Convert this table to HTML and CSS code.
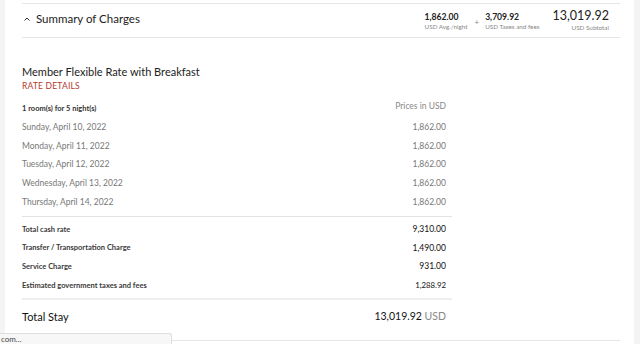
FILE: index.html
```html
<!DOCTYPE html>
<html lang="en">
<head>
  <meta charset="UTF-8">
  <meta name="viewport" content="width=device-width, initial-scale=1.0">
  <title>Summary of Charges</title>
  <link rel="stylesheet" href="styles.css">
</head>
<body>
  <div class="page">
    <div class="gutter"></div>
    <div class="main">
      <div class="summary">
        <div class="summary-title">
          <svg class="chevron" width="6" height="4" viewBox="0 0 6 4"><path d="M0.5 3.5 L3 1 L5.5 3.5" fill="none" stroke="#333" stroke-width="1"/></svg>
          <span>Summary of Charges</span>
        </div>
        <div class="summary-figures">
          <div class="figure">
            <div class="figure-value">1,862.00</div>
            <div class="figure-label">USD Avg./night</div>
          </div>
          <div class="plus">+</div>
          <div class="figure">
            <div class="figure-value">3,709.92</div>
            <div class="figure-label">USD Taxes and fees</div>
          </div>
          <div class="figure figure-total">
            <div class="figure-value">13,019.92</div>
            <div class="figure-label">USD Subtotal</div>
          </div>
        </div>
      </div>

      <div class="rate">
        <h2 class="rate-name">Member Flexible Rate with Breakfast</h2>
        <div class="rate-link">RATE DETAILS</div>

        <div class="rate-head">
          <span class="rooms">1 room(s) for 5 night(s)</span>
          <span class="currency">Prices in USD</span>
        </div>

        <div class="nights">
          <div class="row night"><span>Sunday, April 10, 2022</span><span>1,862.00</span></div>
          <div class="row night"><span>Monday, April 11, 2022</span><span>1,862.00</span></div>
          <div class="row night"><span>Tuesday, April 12, 2022</span><span>1,862.00</span></div>
          <div class="row night"><span>Wednesday, April 13, 2022</span><span>1,862.00</span></div>
          <div class="row night"><span>Thursday, April 14, 2022</span><span>1,862.00</span></div>
        </div>

        <div class="charges">
          <div class="row charge"><span>Total cash rate</span><span class="amount">9,310.00</span></div>
          <div class="row charge"><span>Transfer / Transportation Charge</span><span class="amount">1,490.00</span></div>
          <div class="row charge"><span>Service Charge</span><span class="amount">931.00</span></div>
          <div class="row charge"><span>Estimated government taxes and fees</span><span class="amount small">1,288.92</span></div>
        </div>

        <div class="row total">
          <span>Total Stay</span>
          <span>13,019.92 <span class="unit">USD</span></span>
        </div>
      </div>
      <div class="end-line"></div>
    </div>
    <div class="gutter"></div>
  </div>

  <div class="status">com...</div>
</body>
</html>
```

FILE: styles.css
```css
body {
  margin: 0;
  background: #fff;
  font-family: Lato, "Open Sans", Arial, sans-serif;
  color: #222;
  overflow: hidden;
}

.page {
  display: flex;
  height: 344px;
}

.gutter {
  width: 5px;
  background: #f4f4f4;
  flex: none;
}
.gutter:last-child {
  width: 6px;
}

.main {
  flex: 1;
  padding: 3px 14px 0 17px;
}

/* collapsible header */
.summary {
  display: flex;
  justify-content: space-between;
  align-items: center;
  height: 33px;
  border-top: 1px solid #e6e6e6;
  border-bottom: 1px solid #e6e6e6;
}

.summary-title {
  display: flex;
  align-items: center;
  gap: 6px;
  padding-left: 2px;
  padding-bottom: 4px;
  font-size: 11.5px;
  color: #222;
}

.chevron {
  margin-top: 1px;
}

.summary-figures {
  display: flex;
  align-items: flex-start;
  padding-right: 11px;
  padding-top: 2px;
}

.figure {
  display: flex;
  flex-direction: column;
}

.figure-value {
  font-size: 8.6px;
  font-weight: 700;
  line-height: 11px;
  color: #222;
}

.figure-label {
  font-size: 6.3px;
  color: #888;
  line-height: 8px;
}

.plus {
  font-size: 8px;
  color: #888;
  margin: 5px 6px 0 7px;
}

.figure-total {
  align-items: flex-end;
  margin-left: 13px;
  margin-top: -4px;
}
.figure-total .figure-value {
  font-size: 12.5px;
  font-weight: 400;
  line-height: 16px;
}

/* rate breakdown */
.rate {
  width: 430px;
  padding-top: 26px;
}

.rate-name {
  margin: 0;
  font-size: 11px;
  font-weight: 400;
  color: #222;
  line-height: 16px;
}

.rate-link {
  margin-top: 1px;
  font-size: 8.5px;
  color: #b3382c;
  letter-spacing: 0.2px;
}

.rate-head {
  display: flex;
  justify-content: space-between;
  align-items: center;
  margin-top: 7px;
  padding-right: 6px;
}

.rooms {
  font-size: 7.5px;
  font-weight: 700;
  color: #333;
  margin-top: 6px;
}

.currency {
  font-size: 8.5px;
  color: #888;
}

.row {
  display: flex;
  justify-content: space-between;
  align-items: center;
  padding-right: 6px;
}

.nights {
  padding-top: 5px;
  padding-bottom: 5px;
  border-bottom: 1px solid #e2e2e2;
}

.night {
  height: 18.6px;
  font-size: 8.5px;
  color: #777;
}

.charges {
  padding-top: 3px;
  padding-bottom: 4px;
  border-bottom: 2px solid #eeeeee;
}

.charge {
  height: 18.6px;
  font-size: 7.5px;
  font-weight: 700;
  color: #3a3a3a;
}

.amount {
  font-size: 8.5px;
  font-weight: 400;
  color: #111;
}
.amount.small {
  font-size: 7.8px;
}

.total {
  height: 32px;
  font-size: 11px;
  color: #111;
}
.total span:last-child {
  font-size: 10.5px;
}

.unit {
  color: #888;
}

.end-line {
  margin-top: 8px;
  border-top: 1px solid #e6e6e6;
}

/* browser link preview */
.status {
  position: absolute;
  left: 0;
  top: 333px;
  width: 170px;
  height: 11px;
  padding-left: 1px;
  background: #f7f7f7;
  border: 1px solid #dedede;
  border-left: none;
  border-bottom: none;
  border-top-right-radius: 3px;
  font-size: 8px;
  line-height: 11px;
  color: #444;
}
```
